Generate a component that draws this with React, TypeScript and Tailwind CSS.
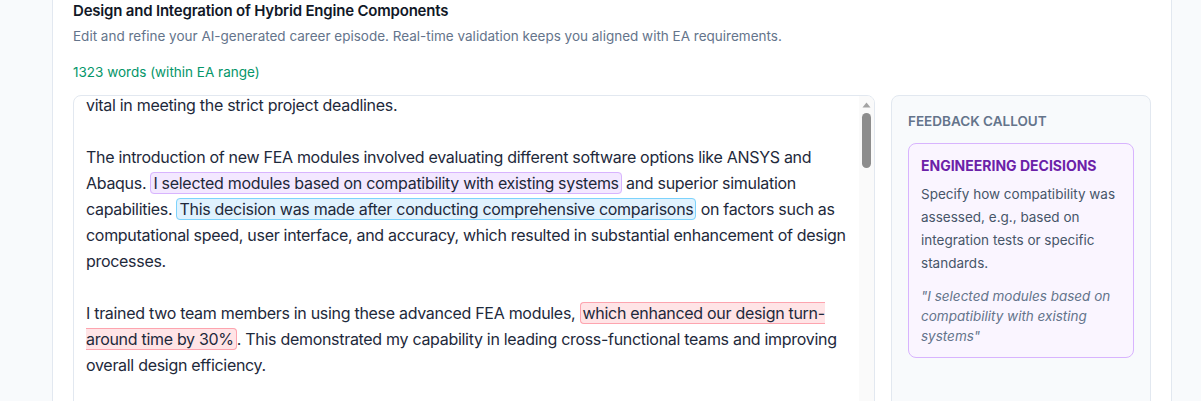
const Mark = ({ tone, children }: { tone: "purple" | "blue" | "pink"; children: React.ReactNode }) => {
  const tones = {
    purple: "bg-[#f3e8ff] border-[#d8b4fe]",
    blue: "bg-[#e0f2fe] border-[#7dd3fc]",
    pink: "bg-[#ffe4e6] border-[#fda4af]",
  };
  return <span className={`rounded-[4px] border px-[2px] ${tones[tone]}`}>{children}</span>;
};

const App = () => {
  return (
    <div className="h-[401px] overflow-hidden bg-[#f8fafc] pl-[52px]" style={{ fontFamily: "Inter, 'Noto Sans', sans-serif" }}>
      <div className="w-[1120px] min-h-[600px] border-x border-[#e2e8f0] bg-white px-5">
        <h1 className="pt-px text-[15px] leading-[20px] font-semibold tracking-[-0.2px] text-[#111827]">
          Design and Integration of Hybrid Engine Components
        </h1>
        <p className="mt-[5px] text-[13.5px] leading-[20px] text-[#64748b]">
          Edit and refine your AI-generated career episode. Real-time validation keeps you aligned with EA requirements.
        </p>
        <p className="mt-[16px] text-[13.5px] leading-[20px] text-[#059669]">1323 words (within EA range)</p>

        <div className="mt-[13px] flex gap-4">
          {/* editor */}
          <div className="relative h-[500px] w-[802px] overflow-hidden rounded-lg border border-[#e2e8f0] bg-white">
            <div className="pl-3 pr-4 text-[16px] leading-[26px] tracking-[-0.3px] text-[#1e293b]">
              <p className="mt-[-4px] mb-[26px]">vital in meeting the strict project deadlines.</p>
              <p className="mb-[26px]">
                The introduction of new FEA modules involved evaluating different software options like ANSYS and Abaqus.{" "}
                <Mark tone="purple">I selected modules based on compatibility with existing systems</Mark> and superior
                simulation capabilities.{" "}
                <Mark tone="blue">This decision was made after conducting comprehensive comparisons</Mark> on factors such as
                computational speed, user interface, and accuracy, which resulted in substantial enhancement of design processes.
              </p>
              <p className="mb-[26px]">
                I trained two team members in using these advanced FEA modules,{" "}
                <Mark tone="pink">which enhanced our design turn-around time by 30%</Mark>. This demonstrated my capability in
                leading cross-functional teams and improving overall design efficiency.
              </p>
              <p className="mb-[26px]">
                Throughout the project, I maintained detailed documentation of design iterations, test results and lessons
                learned, which provided a reference for future hybrid engine programs.
              </p>
            </div>
            {/* scrollbar */}
            <div className="absolute right-0 top-0 flex h-full w-[15px] flex-col items-center bg-[#fafafa]">
              <svg width="9" height="6" viewBox="0 0 9 6" className="mt-[6px]">
                <path d="M4.5 0.5 L8.5 5.5 L0.5 5.5 Z" fill="#a3a3a3" />
              </svg>
              <div className="mt-[5px] h-[55px] w-[9px] rounded-full bg-[#8d8d8d]" />
            </div>
          </div>

          {/* feedback panel */}
          <div className="h-[500px] w-[260px] rounded-lg border border-[#e2e8f0] bg-[#f8fafc] px-4 pt-[15px]">
            <div className="text-[13.5px] leading-[20px] font-semibold uppercase text-[#64748b]">Feedback Callout</div>
            <div className="mt-[12px] rounded-lg border border-[#d8b4fe] bg-[#faf5ff] px-3 pt-[12px] pb-[11px]">
              <div className="text-[14px] leading-[20px] font-bold uppercase text-[#6b21a8]">Engineering Decisions</div>
              <p className="mt-[7px] text-[13.5px] leading-[23px] text-[#475569]">
                Specify how compatibility was assessed, e.g., based on integration tests or specific standards.
              </p>
              <p className="mt-[11px] text-[13.5px] leading-[20px] italic text-[#64748b]">
                "I selected modules based on compatibility with existing systems"
              </p>
            </div>
          </div>
        </div>
      </div>
    </div>
  );
};

export default App;
